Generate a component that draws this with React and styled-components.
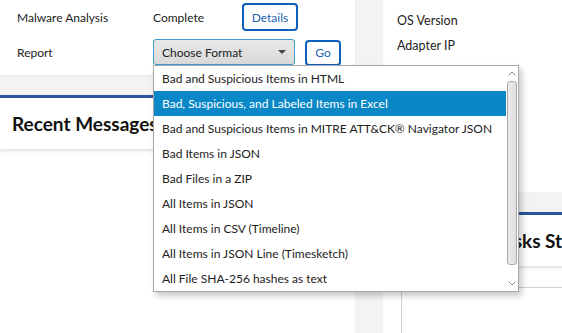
import React from "react";
import styled, { createGlobalStyle } from "styled-components";

const GlobalStyle = createGlobalStyle`
  html, body {
    margin: 0;
    padding: 0;
    background: #f3f3f3;
    font-family: Lato, "Noto Sans", sans-serif;
    color: #222;
    overflow: hidden;
  }
`;

const formats = [
  "Bad and Suspicious Items in HTML",
  "Bad, Suspicious, and Labeled Items in Excel",
  "Bad and Suspicious Items in MITRE ATT&CK® Navigator JSON",
  "Bad Items in JSON",
  "Bad Files in a ZIP",
  "All Items in JSON",
  "All Items in CSV (Timeline)",
  "All Items in JSON Line (Timesketch)",
  "All File SHA-256 hashes as text",
];

const App = () => {
  return (
    <>
      <GlobalStyle />
      <Page>
        <Column>
          <SummaryCard>
            <Row>
              <Label>Malware Analysis</Label>
              <Value>Complete</Value>
              <OutlineButton>Details</OutlineButton>
            </Row>
            <Row>
              <Label>Report</Label>
              <SelectWrap>
                <Select>
                  Choose Format
                  <Caret />
                </Select>
                <Menu>
                  <MenuList>
                    {formats.map((f, i) => (
                      <MenuItem key={f} active={i === 1}>
                        {f}
                      </MenuItem>
                    ))}
                  </MenuList>
                  <Scrollbar>
                    <Chevron viewBox="0 0 8 5">
                      <path d="M0.5 4.5 L4 1 L7.5 4.5" />
                    </Chevron>
                    <Thumb />
                    <Chevron viewBox="0 0 8 5">
                      <path d="M0.5 0.5 L4 4 L7.5 0.5" />
                    </Chevron>
                  </Scrollbar>
                </Menu>
              </SelectWrap>
              <OutlineButton small>Go</OutlineButton>
            </Row>
          </SummaryCard>
          <Panel>
            <PanelHeader>Recent Messages</PanelHeader>
            <PanelBody />
          </Panel>
        </Column>

        <Column>
          <InfoCard>
            <InfoRow>OS Version</InfoRow>
            <InfoRow>Adapter IP</InfoRow>
          </InfoCard>
          <Panel>
            <PanelHeader>Submission Tasks Status</PanelHeader>
            <PanelBody>
              <TableHead />
              <TableBody>
                <Cell />
                <Cell />
              </TableBody>
            </PanelBody>
          </Panel>
        </Column>
      </Page>
    </>
  );
};

export default App;

const Page = styled.div`
  display: grid;
  grid-template-columns: 355px 1fr;
  column-gap: 28px;
  width: 600px;
  height: 333px;
`;

const Column = styled.div`
  display: flex;
  flex-direction: column;
  gap: 20px;
  min-width: 0;
`;

const SummaryCard = styled.div`
  background: #fff;
  height: 75px;
  box-sizing: border-box;
  padding: 3px 0 0 17px;
  display: flex;
  flex-direction: column;
  gap: 7px;
  box-shadow: 0 1px 2px rgba(0, 0, 0, 0.06);
`;

const Row = styled.div`
  display: flex;
  align-items: center;
  height: 28px;
  font-size: 12px;
`;

const Label = styled.div`
  width: 136px;
  color: #222;
`;

const Value = styled.div`
  width: 89px;
  color: #222;
`;

const OutlineButton = styled.button`
  font-family: inherit;
  font-size: 12px;
  color: #1a5fb4;
  background: #fff;
  border: 2px solid #0f5fbe;
  border-radius: 4px;
  height: ${(p) => (p.small ? "26px" : "28px")};
  width: ${(p) => (p.small ? "36px" : "56px")};
  margin-left: ${(p) => (p.small ? "10px" : "0")};
  margin-top: ${(p) => (p.small ? "1px" : "0")};
  padding: 0;
`;

const SelectWrap = styled.div`
  position: relative;
`;

const Select = styled.div`
  width: 142px;
  height: 26px;
  box-sizing: border-box;
  border: 1px solid #3d9ad8;
  border-radius: 3px;
  background: linear-gradient(#e8e8e8, #d9d9d9);
  display: flex;
  align-items: center;
  padding-left: 8px;
  font-size: 12px;
  color: #222;
  position: relative;
`;

const Caret = styled.span`
  position: absolute;
  right: 8px;
  top: 10px;
  border-left: 4px solid transparent;
  border-right: 4px solid transparent;
  border-top: 4px solid #444;
`;

const Menu = styled.div`
  position: absolute;
  left: 0;
  top: 26px;
  width: 366px;
  height: 227px;
  box-sizing: border-box;
  border: 1px solid #a8a8a8;
  background: #fff;
  display: flex;
  box-shadow: 3px 4px 6px rgba(0, 0, 0, 0.22);
  z-index: 10;
`;

const MenuList = styled.ul`
  list-style: none;
  margin: 0;
  padding: 0;
  flex: 1;
  overflow: hidden;
`;

const MenuItem = styled.li`
  height: 25px;
  display: flex;
  align-items: center;
  padding-left: 8px;
  font-size: 12px;
  white-space: nowrap;
  color: ${(p) => (p.active ? "#fff" : "#222")};
  background: ${(p) => (p.active ? "#0a87c7" : "transparent")};
`;

const Scrollbar = styled.div`
  width: 12px;
  display: flex;
  flex-direction: column;
  align-items: center;
  background: #fff;
  padding: 3px 0;
  box-sizing: border-box;
`;

const Chevron = styled.svg`
  width: 8px;
  height: 5px;
  margin: 2px 0;
  fill: none;
  stroke: #8a8a8a;
  stroke-width: 1;
`;

const Thumb = styled.div`
  width: 8px;
  height: 182px;
  margin: 3px 0 auto;
  border: 1px solid #a8a8a8;
  border-radius: 3px;
  background: linear-gradient(90deg, #ececec, #dedede);
`;

const Panel = styled.div`
  flex: 1;
  display: flex;
  flex-direction: column;
  border-top: 3px solid #2b5597;
`;

const PanelHeader = styled.div`
  height: 51px;
  background: #fff;
  display: flex;
  align-items: center;
  padding-left: 12px;
  font-size: 19px;
  font-weight: 700;
  color: #111;
  white-space: nowrap;
  overflow: hidden;
  box-shadow: 0 2px 3px rgba(0, 0, 0, 0.12);
  position: relative;
  z-index: 1;
`;

const PanelBody = styled.div`
  flex: 1;
  background: #fff;
  padding: 21px 0 0 0;
`;

const InfoCard = styled.div`
  background: #fff;
  height: 192px;
  box-sizing: border-box;
  padding: 8px 0 0 14px;
`;

const InfoRow = styled.div`
  height: 25px;
  display: flex;
  align-items: center;
  font-size: 12.5px;
  color: #222;
`;

const TableHead = styled.div`
  border-bottom: 1px solid #cfcfcf;
`;

const TableBody = styled.div`
  display: grid;
  grid-template-columns: 19px 1fr;
  height: 60px;
`;

const Cell = styled.div`
  border-right: 1px solid #cfcfcf;
  &:last-child {
    border-right: none;
  }
`;
